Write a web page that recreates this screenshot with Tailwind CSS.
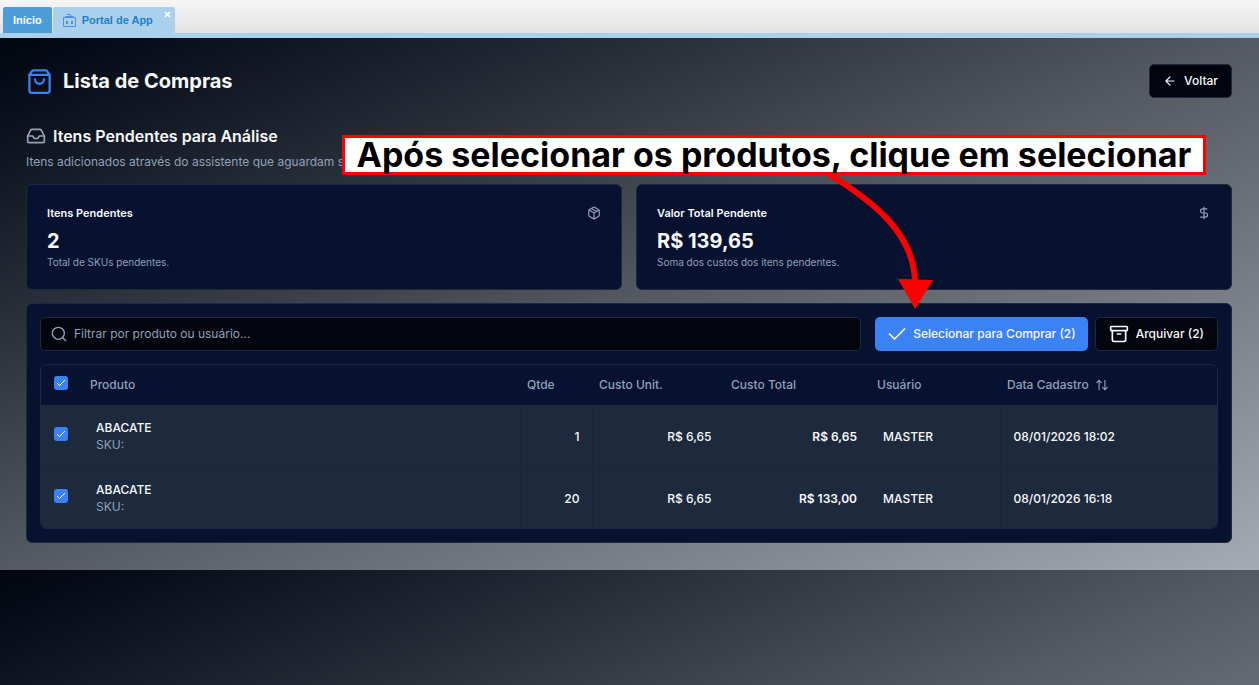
<!DOCTYPE html>
<html lang="pt-BR">
<head>
<meta charset="utf-8">
<meta name="viewport" content="width=device-width, initial-scale=1">
<title>Lista de Compras</title>
<script src="https://cdn.jsdelivr.net/npm/@tailwindcss/browser@4"></script>
</head>
<body class="relative flex min-h-screen flex-col bg-[#02050e] font-['Inter',sans-serif] text-xs text-slate-50">

<nav class="flex h-[38px] items-end gap-px border-b-[5px] border-[#abd0ec] bg-linear-to-b from-[#f6f6f6] to-[#e2e2e2] pl-[3px] font-['Liberation_Sans',sans-serif] text-[11px] font-bold">
  <a href="#" class="flex h-[26px] items-center rounded-t-xs bg-[#4b9cd8] px-[10px] text-white">Início</a>
  <div class="flex h-[26px] rounded-t-xs bg-[#abd0ec] pl-[10px]">
    <a href="#" class="flex items-center gap-[6px] text-[#1b80cb]">
      <svg class="size-[13px]" viewBox="0 0 13 13" fill="none" stroke="#4f8df5"><path d="M.5 3.500h12v9H.5zM2.500 3.500v-1h8v1M4 .5h3.500v2"/><path d="M4 7v3M9 7v3" stroke-width="2"/></svg>
      Portal de App
    </a>
    <button type="button" aria-label="Fechar" class="ml-[11px] mr-1 mt-1 size-[7px] text-white"><svg class="size-[7px]" viewBox="0 0 7 7" fill="none" stroke="currentColor" stroke-width="1.500"><path d="M1 1l5 5M6 1L1 6"/></svg></button>
  </div>
</nav>

<div class="flex-1 bg-linear-to-br from-[#020610] via-[#555962] to-[#a6aab3] bg-[length:100%_532px] bg-repeat-y">
<main class="pt-[26px] pr-[27px] pl-[26px]">
  <header class="flex items-center justify-between">
    <h1 class="flex items-center gap-[10px] text-[20px] font-bold">
      <svg class="size-[27px]" viewBox="0 0 24 24" fill="none" stroke="#3b82f6" stroke-width="2" stroke-linecap="round" stroke-linejoin="round"><path d="M6 2 3 6v14a2 2 0 0 0 2 2h14a2 2 0 0 0 2-2V6l-3-4Z"/><path d="M3 6h18M16 10a4 4 0 0 1-8 0"/></svg>
      Lista de Compras
    </h1>
    <button type="button" class="flex h-[34px] items-center gap-[7px] rounded-[5px] border border-slate-800 bg-[#02050e] px-[13px] font-medium">
      <svg class="size-[14px]" viewBox="0 0 24 24" fill="none" stroke="currentColor" stroke-width="2" stroke-linecap="round" stroke-linejoin="round"><path d="m12 19-7-7 7-7M19 12H5"/></svg>
      Voltar
    </button>
  </header>

  <h2 class="mt-[26px] flex items-center gap-[7px] text-base leading-6 font-semibold">
    <svg class="size-5" viewBox="0 0 24 24" fill="none" stroke="#94a3b8" stroke-width="2" stroke-linecap="round" stroke-linejoin="round"><path d="M22 12h-6l-2 3h-4l-2-3H2"/><path d="M5.450 5.110 2 12v6a2 2 0 0 0 2 2h16a2 2 0 0 0 2-2v-6l-3.450-6.890A2 2 0 0 0 16.760 4H7.240a2 2 0 0 0-1.790 1.110z"/></svg>
    Itens Pendentes para Análise
  </h2>
  <p class="mt-[6px] max-w-[316px] overflow-hidden whitespace-nowrap text-slate-400">Itens adicionados através do assistente que aguardam su</p>

  <section class="mt-[14px] grid grid-cols-2 gap-[14px]">
    <article class="h-[106px] rounded-[6px] border border-slate-800 bg-[#061230] px-5 pt-5">
      <div class="flex items-center justify-between">
        <h3 class="text-[11px] leading-4 font-semibold">Itens Pendentes</h3>
        <svg class="size-[14px]" viewBox="0 0 24 24" fill="none" stroke="#94a3b8" stroke-width="2" stroke-linecap="round" stroke-linejoin="round"><path d="M11 21.730a2 2 0 0 0 2 0l7-4A2 2 0 0 0 21 16V8a2 2 0 0 0-1-1.730l-7-4a2 2 0 0 0-2 0l-7 4A2 2 0 0 0 3 8v8a2 2 0 0 0 1 1.730zM12 22V12M3.290 7 12 12l8.710-5M7.500 4.270l9 5.150"/></svg>
      </div>
      <p class="mt-[6px] text-[20px] leading-7 font-bold">2</p>
      <p class="text-[10px] leading-[14px] text-slate-400">Total de SKUs pendentes.</p>
    </article>
    <article class="h-[106px] rounded-[6px] border border-slate-800 bg-[#061230] px-5 pt-5">
      <div class="flex items-center justify-between">
        <h3 class="text-[11px] leading-4 font-semibold">Valor Total Pendente</h3>
        <svg class="size-[14px]" viewBox="0 0 24 24" fill="none" stroke="#94a3b8" stroke-width="2" stroke-linecap="round" stroke-linejoin="round"><path d="M12 2v20M17 5H9.500a3.500 3.500 0 0 0 0 7h5a3.500 3.500 0 0 1 0 7H6"/></svg>
      </div>
      <p class="mt-[6px] text-[20px] leading-7 font-bold">R$ 139,65</p>
      <p class="text-[10px] leading-[14px] text-slate-400">Soma dos custos dos itens pendentes.</p>
    </article>
  </section>

  <section class="mt-[13px] rounded-[6px] border border-slate-800 bg-[#061230] p-[13px]">
    <div class="flex items-center gap-[7px]">
      <label class="mr-[7px] flex h-[34px] flex-1 items-center gap-[7px] rounded-[5px] border border-slate-800 bg-[#02050e] px-[10px]">
        <svg class="size-4" viewBox="0 0 24 24" fill="none" stroke="#94a3b8" stroke-width="2" stroke-linecap="round" stroke-linejoin="round"><circle cx="11" cy="11" r="9"/><path d="m22 22-4.500-4.500"/></svg>
        <input type="text" aria-label="Filtrar" placeholder="Filtrar por produto ou usuário..." class="flex-1 bg-transparent outline-none placeholder:text-slate-400">
      </label>
      <button type="button" class="flex h-[34px] items-center gap-[6px] rounded-[5px] bg-[#3b82f6] px-3 font-medium">
        <svg class="size-5" viewBox="0 0 24 24" fill="none" stroke="currentColor" stroke-width="2" stroke-linecap="round" stroke-linejoin="round"><path d="M21 6 9 18l-6-6"/></svg>
        Selecionar para Comprar (2)
      </button>
      <button type="button" class="flex h-[34px] items-center gap-[7px] rounded-[5px] border border-slate-800 bg-[#02050e] px-[13px] font-medium">
        <svg class="size-5" viewBox="0 0 24 24" fill="none" stroke="currentColor" stroke-width="2" stroke-linecap="round" stroke-linejoin="round"><rect x="2" y="3" width="20" height="5" rx="1"/><path d="M4 8v11a2 2 0 0 0 2 2h12a2 2 0 0 0 2-2V8M10 12h4"/></svg>
        Arquivar (2)
      </button>
    </div>

    <div class="mt-[13px] overflow-hidden rounded-[7px] border border-slate-800">
      <table class="w-full table-fixed text-left">
        <colgroup><col class="w-[42px]"><col><col class="w-[72px]"><col class="w-[132px]"><col class="w-[146px]"><col class="w-[130px]"><col class="w-[217px]"></colgroup>
        <thead class="text-slate-400">
          <tr class="h-10">
            <th class="px-[13px] pb-1"><label class="grid size-[14px] place-items-center"><input type="checkbox" checked aria-label="Selecionar todos" class="col-start-1 row-start-1 size-[14px] appearance-none rounded-[3px] bg-[#3b82f6]"><svg class="pointer-events-none col-start-1 row-start-1 size-3 text-white" viewBox="0 0 24 24" fill="none" stroke="currentColor" stroke-width="2"><path d="M20 6 9 17l-5-5"/></svg></label></th>
            <th class="px-[7px] font-medium">Produto</th>
            <th class="px-[7px] font-medium">Qtde</th>
            <th class="px-[7px] font-medium">Custo Unit.</th>
            <th class="px-[7px] font-medium">Custo Total</th>
            <th class="px-[7px] font-medium">Usuário</th>
            <th class="px-[7px] font-medium"><button type="button" class="flex items-center gap-[6px] font-medium">Data Cadastro <svg class="size-[14px]" viewBox="0 0 24 24" fill="none" stroke="currentColor" stroke-width="2" stroke-linecap="round" stroke-linejoin="round"><path d="m21 16-4 4-4-4M17 20V4M3 8l4-4 4 4M7 4v16"/></svg></button></th>
          </tr>
        </thead>
        <tbody class="bg-slate-800 font-medium">
          <tr class="h-[61px] border-b border-[#1a2638]">
            <td class="px-[13px] pb-[3px]"><label class="grid size-[14px] place-items-center"><input type="checkbox" checked aria-label="Selecionar ABACATE, 1 unidade" class="col-start-1 row-start-1 size-[14px] appearance-none rounded-[3px] bg-[#3b82f6]"><svg class="pointer-events-none col-start-1 row-start-1 size-3 text-white" viewBox="0 0 24 24" fill="none" stroke="currentColor" stroke-width="2"><path d="M20 6 9 17l-5-5"/></svg></label></td>
            <td class="border-r border-[#1a2638] px-[13px] pt-px leading-[17px]"><div>ABACATE</div><div class="font-normal text-slate-400">SKU:</div></td>
            <td class="border-r border-[#1a2638] px-3 pt-[3px] text-right">1</td>
            <td class="border-r border-[#1c293b] px-3 pt-[3px] text-right">R$ 6,65</td>
            <td class="px-[13px] pt-[3px] text-right font-semibold">R$ 6,65</td>
            <td class="border-r border-[#1a2638] px-[13px] pt-[3px]">MASTER</td>
            <td class="px-[13px] pt-[3px]">08/01/2026 18:02</td>
          </tr>
          <tr class="h-[62px]">
            <td class="px-[13px] pb-[3px]"><label class="grid size-[14px] place-items-center"><input type="checkbox" checked aria-label="Selecionar ABACATE, 20 unidades" class="col-start-1 row-start-1 size-[14px] appearance-none rounded-[3px] bg-[#3b82f6]"><svg class="pointer-events-none col-start-1 row-start-1 size-3 text-white" viewBox="0 0 24 24" fill="none" stroke="currentColor" stroke-width="2"><path d="M20 6 9 17l-5-5"/></svg></label></td>
            <td class="border-r border-[#1a2638] px-[13px] pt-px leading-[17px]"><div>ABACATE</div><div class="font-normal text-slate-400">SKU:</div></td>
            <td class="border-r border-[#1a2638] px-3 pt-[3px] text-right">20</td>
            <td class="border-r border-[#1c293b] px-3 pt-[3px] text-right">R$ 6,65</td>
            <td class="px-[13px] pt-[3px] text-right font-semibold">R$ 133,00</td>
            <td class="border-r border-[#1a2638] px-[13px] pt-[3px]">MASTER</td>
            <td class="px-[13px] pt-[3px]">08/01/2026 16:18</td>
          </tr>
        </tbody>
      </table>
    </div>
  </section>
</main>
</div>

<aside class="absolute top-[135px] left-[342px] flex h-10 w-[864px] items-center justify-center border-3 border-[#f00] bg-white text-[34px] leading-none font-bold whitespace-nowrap text-black">Após selecionar os produtos, clique em selecionar</aside>
<svg class="pointer-events-none absolute top-[172px] left-[820px] h-[140px] w-[120px]" viewBox="820 172 120 140" fill="none"><path d="M829 174C872 201 914 232 915 282" stroke="#f00" stroke-width="6"/><path d="M898 279L933 280L915 309Z" fill="#f00"/></svg>
</body>
</html>
